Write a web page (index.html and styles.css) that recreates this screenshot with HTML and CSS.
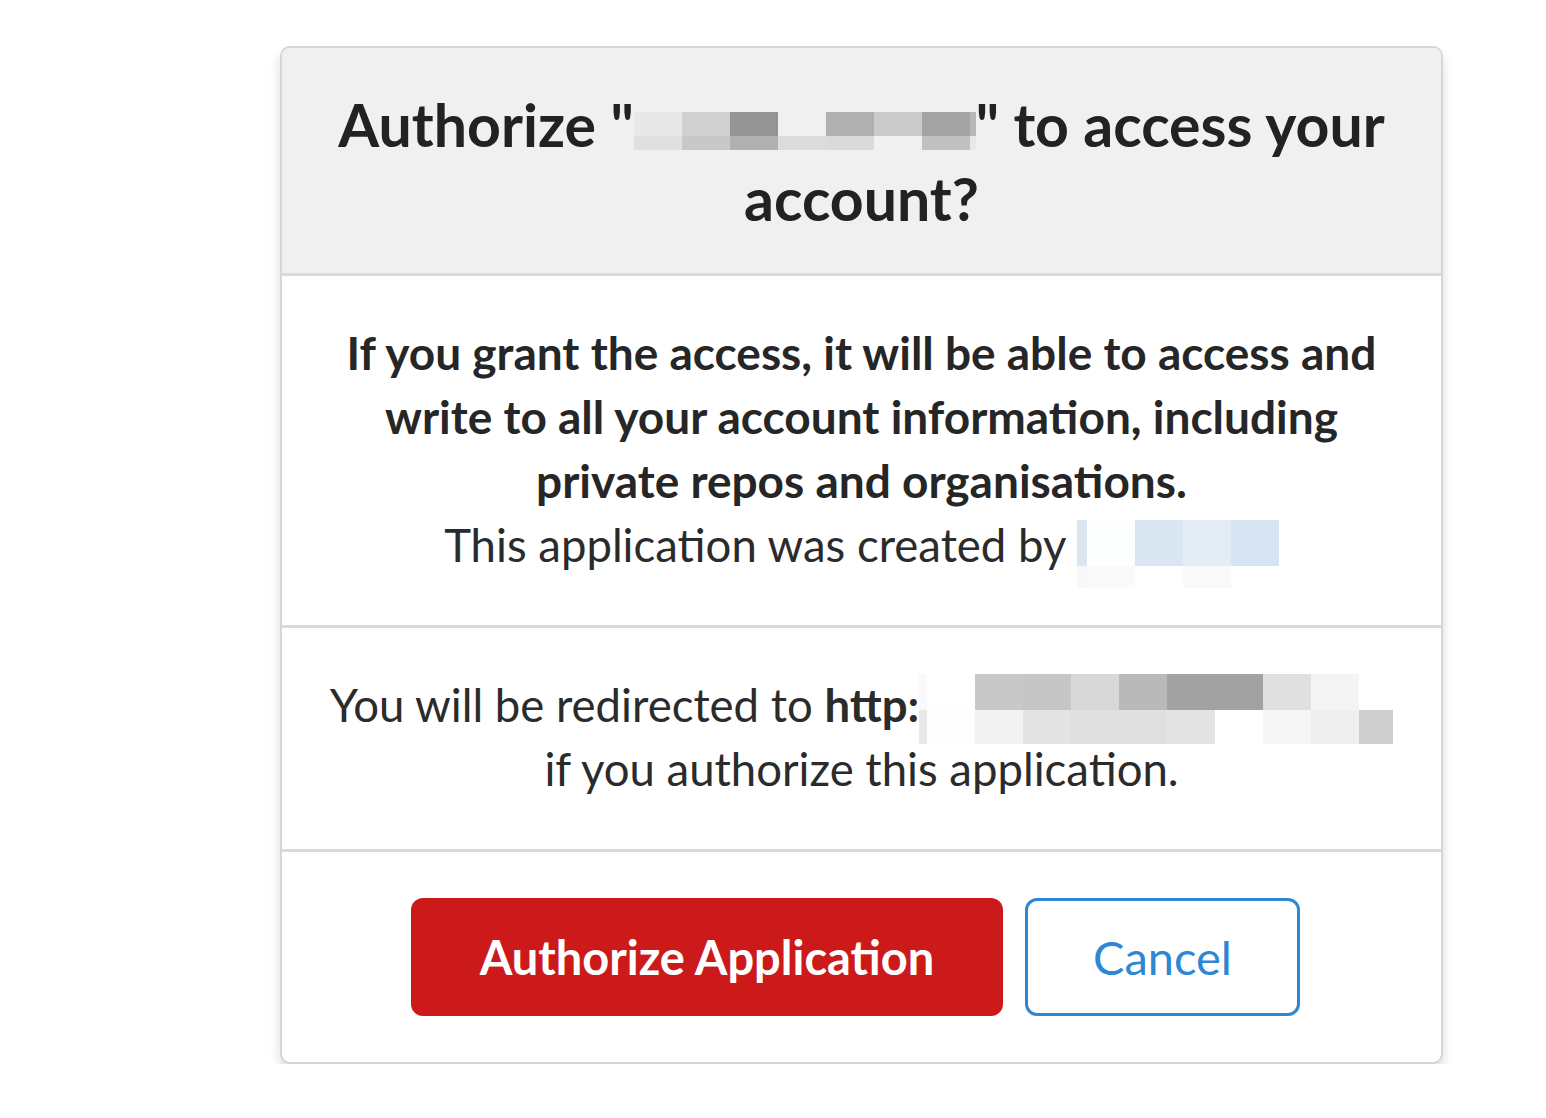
FILE: index.html
```html
<!DOCTYPE html>
<html lang="en">
<head>
  <meta charset="UTF-8" />
  <title>Authorize Application</title>
  <link rel="stylesheet" href="styles.css">
</head>
<body>
  <div class="card">
    <!-- Heading -->
    <div class="card-header">
      <h1>Authorize "<span class="mosaic mosaic-app"><i class="c1"></i><i class="c2"></i><i class="c3"></i><i class="c4"></i><i class="c5"></i><i class="c6"></i><i class="c7"></i><i class="c8"></i><i class="d1"></i><i class="d2"></i><i class="d3"></i><i class="d4"></i><i class="d5"></i><i class="d6"></i><i class="d7"></i><i class="d8"></i></span>" to access your<br>account?</h1>
    </div>

    <!-- Scope warning -->
    <div class="card-section">
      <p class="warning">If you grant the access, it will be able to access and<br>write to all your account information, including<br>private repos and organisations.</p>
      <p class="creator">This application was created by <span class="mosaic mosaic-user"><i class="u1"></i><i class="u2"></i><i class="u3"></i><i class="u4"></i><i class="u5"></i><i class="v1"></i><i class="v2"></i><i class="v3"></i><i class="v4"></i><i class="v5"></i></span></p>
    </div>

    <!-- Redirect -->
    <div class="card-section">
      <p class="redirect">You will be redirected to <b>http:</b><span class="mosaic mosaic-url"><i class="r1"></i><i class="r2"></i><i class="r3"></i><i class="r4"></i><i class="r5"></i><i class="r6"></i><i class="r7"></i><i class="r8"></i><i class="r9"></i><i class="r10"></i><i class="r11"></i><i class="s1"></i><i class="s2"></i><i class="s3"></i><i class="s4"></i><i class="s5"></i><i class="s6"></i><i class="s7"></i><i class="s8"></i><i class="s9"></i><i class="s10"></i><i class="s11"></i></span><br>if you authorize this application.</p>
    </div>

    <!-- Actions -->
    <div class="card-actions">
      <button class="btn btn-primary">Authorize Application</button>
      <button class="btn btn-cancel">Cancel</button>
    </div>
  </div>
</body>
</html>
```

FILE: styles.css
```css
body {
  margin: 0;
  background: #fff;
  font-family: Lato, 'Open Sans', sans-serif;
  color: #2b2b2b;
}

.card {
  width: 1159px;
  margin: 46px 0 0 280px;
  border: 2px solid #d6d6d6;
  border-radius: 10px;
  box-shadow: 0 7px 12px rgba(0,0,0,0.14);
  overflow: hidden;
  background: #fff;
}

.card-header {
  background: #f0f0f0;
  padding: 40px 10px 37px;
  border-bottom: 3px solid #dadada;
  text-align: center;
}

h1 {
  margin: 0;
  font-size: 59px;
  line-height: 74px;
  font-weight: 700;
  color: #222;
  white-space: nowrap;
}

.card-section {
  padding: 45px 10px 48px;
  border-bottom: 3px solid #dadada;
  text-align: center;
}

.card-section p {
  margin: 0;
  font-size: 45.5px;
  line-height: 64px;
  white-space: nowrap;
}

.card-section .warning {
  font-weight: 700;
  font-size: 46px;
  color: #262626;
}

.redirect b {
  font-weight: 700;
}

/* pixelated placeholders */
.mosaic {
  display: inline-grid;
  vertical-align: top;
}

.mosaic-app {
  grid-template-columns: repeat(7, 48px) 6px;
  grid-template-rows: 24px 14px;
  margin-top: 24px;
  margin-bottom: -4px;
}

.c1 { background: #e8e8e8; }
.c2 { background: #d0d0d0; }
.c3 { background: #949494; }
.c4 { background: #f0f0f0; }
.c5 { background: #b0b0b0; }
.c6 { background: #cbcbcb; }
.c7 { background: #a3a3a3; }
.c8 { background: #b8b8b8; }
.d1 { background: #e0e0e0; }
.d2 { background: #c8c8c8; }
.d3 { background: #b0b0b0; }
.d4 { background: #dcdcdc; }
.d5 { background: #dadada; }
.d6 { background: #f0f0f0; }
.d7 { background: #c0c0c0; }
.d8 { background: #e8e8e8; }

.mosaic-user {
  grid-template-columns: 10px repeat(4, 48px);
  grid-template-rows: 46px 22px;
  margin-top: 7px;
  margin-bottom: -20px;
}

.u1 { background: #dce6f0; }
.u2 { background: #fdfefe; }
.u3 { background: #dae6f2; }
.u4 { background: #e4ecf6; }
.u5 { background: #d6e4f2; }
.v1 { background: #f8f8f8; }
.v2 { background: #fafafa; }
.v3 { background: #fff; }
.v4 { background: #f9f9f9; }
.v5 { background: #fff; }

.mosaic-url {
  grid-template-columns: 8px repeat(9, 48px) 34px;
  grid-template-rows: 36px 34px;
  margin-top: 1px;
  margin-bottom: -10px;
}

.r1 { background: #fafafa; }
.r2 { background: #fff; }
.r3 { background: #c8c8c8; }
.r4 { background: #c6c6c6; }
.r5 { background: #d8d8d8; }
.r6 { background: #b9b9b9; }
.r7 { background: #a2a2a2; }
.r8 { background: #a2a2a2; }
.r9 { background: #e0e0e0; }
.r10 { background: #f4f4f4; }
.r11 { background: #fff; }
.s1 { background: #e8e8e8; }
.s2 { background: #fdfdfd; }
.s3 { background: #f2f2f2; }
.s4 { background: #e4e4e4; }
.s5 { background: #e0e0e0; }
.s6 { background: #e0e0e0; }
.s7 { background: #e4e4e4; }
.s8 { background: #fff; }
.s9 { background: #f6f6f6; }
.s10 { background: #efefef; }
.s11 { background: #cfcfcf; }

.card-actions {
  display: flex;
  justify-content: center;
  gap: 22px;
  padding: 46px 52px 46px 40px;
}

.btn {
  font-family: Lato, 'Open Sans', sans-serif;
  font-size: 47px;
  height: 118px;
  border-radius: 12px;
  cursor: pointer;
}

.btn-primary {
  background: #cc1a1a;
  color: #fff;
  font-weight: 700;
  border: none;
  width: 592px;
}

.btn-cancel {
  background: #fff;
  color: #2d87d4;
  border: 3px solid #2d87d4;
  width: 275px;
}
```
